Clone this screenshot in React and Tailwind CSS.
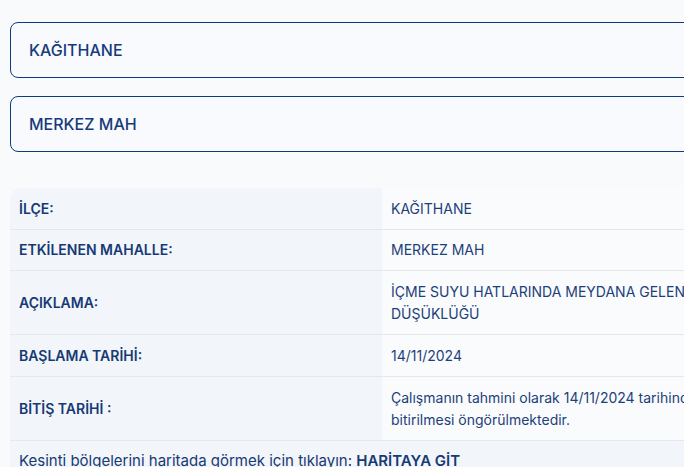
import React from 'react';

const rows = [
    { label: 'İLÇE:', value: 'KAĞITHANE', h: 'h-[42px]' },
    { label: 'ETKİLENEN MAHALLE:', value: 'MERKEZ MAH', h: 'h-[41px]' },
    {
        label: 'AÇIKLAMA:',
        h: 'h-[64px]',
        value: (
            <>
                İÇME SUYU HATLARINDA MEYDANA GELEN ARIZA NEDENİYLE BASINÇ
                <br />
                DÜŞÜKLÜĞÜ
            </>
        ),
    },
    { label: 'BAŞLAMA TARİHİ:', value: '14/11/2024', h: 'h-[42px]' },
    {
        label: 'BİTİŞ TARİHİ :',
        h: 'h-[64px]',
        value: (
            <>
                Çalışmanın tahmini olarak 14/11/2024 tarihinde
                <br />
                bitirilmesi öngörülmektedir.
            </>
        ),
    },
];

const Field = ({ value }) => (
    <div className="w-[1000px] h-[56px] flex items-center px-[18px] border border-[#0d3b82] rounded-lg bg-[#f9fafd] text-[16px] font-medium text-[#173b7a]">
        {value}
    </div>
);

export default function App() {
    return (
        <div
            className="w-screen h-screen overflow-hidden bg-[#f9fafc] pl-[10px] pt-[22px]"
            style={{ fontFamily: 'Inter, "Noto Sans", sans-serif' }}
        >
            {/* Selected district / neighbourhood */}
            <div className="flex flex-col gap-[18px]">
                <Field value="KAĞITHANE" />
                <Field value="MERKEZ MAH" />
            </div>

            {/* Details table */}
            <div className="mt-[36px] w-[1000px] rounded-tl-xl overflow-hidden">
                {rows.map((row, i) => (
                    <div key={i} className={`flex border-b border-[#e4e7ec] ${row.h}`}>
                        <div className="w-[372px] shrink-0 bg-[#f2f5fa] px-[9px] flex items-center text-[14px] leading-[20px] font-semibold text-[#163a74]">
                            {row.label}
                        </div>
                        <div className="flex-1 bg-[#f9fbfd] px-[9px] flex items-center text-[14px] leading-[21.5px] text-[#1d3f7a]">
                            <div>{row.value}</div>
                        </div>
                    </div>
                ))}
                <div className="bg-[#f2f5fa] px-[9px] py-[9px] text-[15px] leading-[22px] text-[#163a74]">
                    Kesinti bölgelerini haritada görmek için tıklayın:{' '}
                    <a href="#" className="font-semibold">HARİTAYA GİT</a>
                </div>
            </div>
        </div>
    );
}
